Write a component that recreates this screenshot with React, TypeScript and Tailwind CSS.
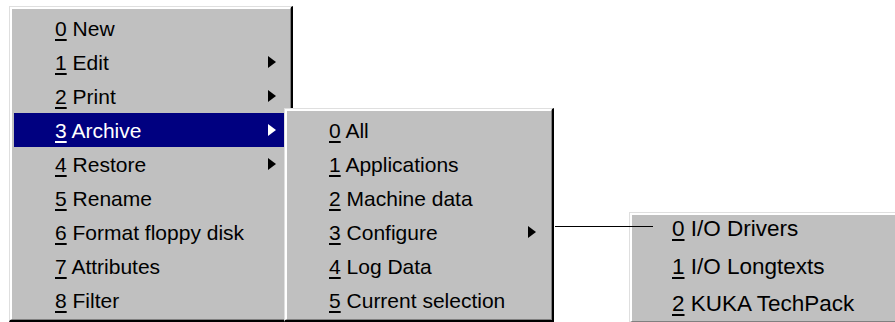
import React from "react";

type Item = { key: string; label: string; sub?: boolean; active?: boolean };

const mainItems: Item[] = [
  { key: "0", label: "New" },
  { key: "1", label: "Edit", sub: true },
  { key: "2", label: "Print", sub: true },
  { key: "3", label: "Archive", sub: true, active: true },
  { key: "4", label: "Restore", sub: true },
  { key: "5", label: "Rename" },
  { key: "6", label: "Format floppy disk" },
  { key: "7", label: "Attributes" },
  { key: "8", label: "Filter" },
];

const archiveItems: Item[] = [
  { key: "0", label: "All" },
  { key: "1", label: "Applications" },
  { key: "2", label: "Machine data" },
  { key: "3", label: "Configure", sub: true },
  { key: "4", label: "Log Data" },
  { key: "5", label: "Current selection" },
];

const configureItems: Item[] = [
  { key: "0", label: "I/O Drivers" },
  { key: "1", label: "I/O Longtexts" },
  { key: "2", label: "KUKA TechPack" },
];

const Arrow = ({ white }: { white?: boolean }) => (
  <svg width="8" height="12" viewBox="0 0 8 12" className="shrink-0">
    <path d="M0 0L8 6L0 12Z" fill={white ? "#ffffff" : "#000000"} />
  </svg>
);

// classic win95 raised frame: light/white on top-left, gray/black on bottom-right
const MenuBox = ({
  className,
  children,
}: {
  className: string;
  children: React.ReactNode;
}) => (
  <div
    className={`border-t border-l border-t-[#dfdfdf] border-l-[#dfdfdf] border-r-2 border-b-2 border-r-black border-b-black bg-[#c0c0c0] ${className}`}
  >
    <div className="h-full border-t-2 border-l-2 border-t-white border-l-white border-r border-b border-r-[#808080] border-b-[#808080]">
      {children}
    </div>
  </div>
);

const MenuRow = ({
  item,
  rowClass,
}: {
  item: Item;
  rowClass: string;
}) => (
  <div
    className={`flex justify-between leading-none ${rowClass} ${
      item.active ? "bg-[#000080] text-white" : "text-black"
    }`}
  >
    <span className="whitespace-nowrap">
      <span className="underline decoration-[1.5px] underline-offset-[3px]">
        {item.key}
      </span>{" "}
      {item.label}
    </span>
    {item.sub && <Arrow white={item.active} />}
  </div>
);

export default function App() {
  return (
    <div className="relative w-[895px] h-[322px] overflow-hidden bg-white flex items-start font-['Liberation_Sans',Arial,sans-serif]">
      <MenuBox className="ml-[9px] mt-[6px] w-[284px] h-[316px] shrink-0 text-[21px]">
        <div className="p-[2px]">
          {mainItems.map((it) => (
            <MenuRow
              key={it.key}
              item={it}
              rowClass="h-[34px] items-center pl-[41px] pr-[12px]"
            />
          ))}
        </div>
      </MenuBox>

      <MenuBox className="relative z-10 -ml-[9px] mt-[108px] w-[270px] h-[214px] shrink-0 text-[21px]">
        <div className="p-[2px]">
          {archiveItems.map((it) => (
            <MenuRow
              key={it.key}
              item={it}
              rowClass="h-[34px] items-center pl-[40px] pr-[13px]"
            />
          ))}
        </div>
      </MenuBox>

      <MenuBox className="ml-[75px] mt-[212px] w-[280px] h-[112px] shrink-0 text-[22.5px]">
        {configureItems.map((it) => (
          <MenuRow
            key={it.key}
            item={it}
            rowClass="h-[37.5px] items-start pt-[3px] pl-[40px] pr-[13px]"
          />
        ))}
      </MenuBox>

      {/* connector from "Configure" to its submenu */}
      <div className="absolute left-[555px] top-[226px] z-20 h-px w-[98px] bg-black" />
    </div>
  );
}
